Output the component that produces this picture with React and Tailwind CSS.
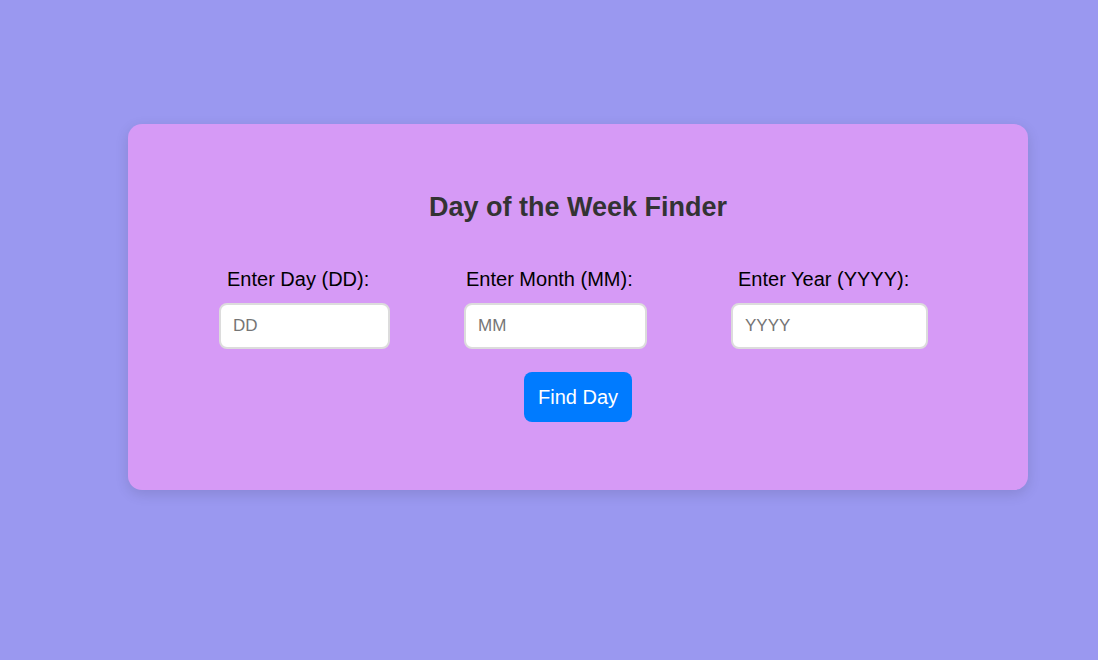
export default function App() {
  const font = { fontFamily: '"Liberation Sans", Arial, sans-serif' };
  return (
    <div className="w-[1098px] h-[660px] bg-[#9a98f0] pt-[124px] pl-[128px]" style={font}>
      <div className="w-[900px] h-[366px] bg-[#d69af6] rounded-[14px] shadow-[0_4px_14px_rgba(0,0,0,0.12)] pt-[67px] flex flex-col">
        <h2 className="text-center text-[27px] leading-[32px] font-bold text-[#333333]">Day of the Week Finder</h2>
        <div className="flex pl-[91px] mt-[45px]">
          <div className="flex flex-col w-[171px]">
            <label className="ml-[8px] text-[20px] leading-[23px] text-black whitespace-nowrap">Enter Day (DD):</label>
            <input placeholder="DD" className="mt-[12px] w-[171px] h-[46px] bg-white border-2 border-[#dcdcdc] rounded-[8px] pl-[12px] text-[17px] text-black placeholder:text-[#757575] outline-none" />
          </div>
          <div className="flex flex-col w-[183px] ml-[74px]">
            <label className="ml-[2px] text-[20px] leading-[23px] text-black whitespace-nowrap">Enter Month (MM):</label>
            <input placeholder="MM" className="mt-[12px] w-[183px] h-[46px] bg-white border-2 border-[#dcdcdc] rounded-[8px] pl-[12px] text-[17px] text-black placeholder:text-[#757575] outline-none" />
          </div>
          <div className="flex flex-col w-[197px] ml-[84px]">
            <label className="ml-[7px] text-[20px] leading-[23px] text-black whitespace-nowrap">Enter Year (YYYY):</label>
            <input placeholder="YYYY" className="mt-[12px] w-[197px] h-[46px] bg-white border-2 border-[#dcdcdc] rounded-[8px] pl-[12px] text-[17px] text-black placeholder:text-[#757575] outline-none" />
          </div>
        </div>
        <div className="flex justify-center mt-[23px]">
          <button className="w-[108px] h-[50px] bg-[#007bff] text-white text-[20px] rounded-[8px]">Find Day</button>
        </div>
      </div>
    </div>
  );
}
